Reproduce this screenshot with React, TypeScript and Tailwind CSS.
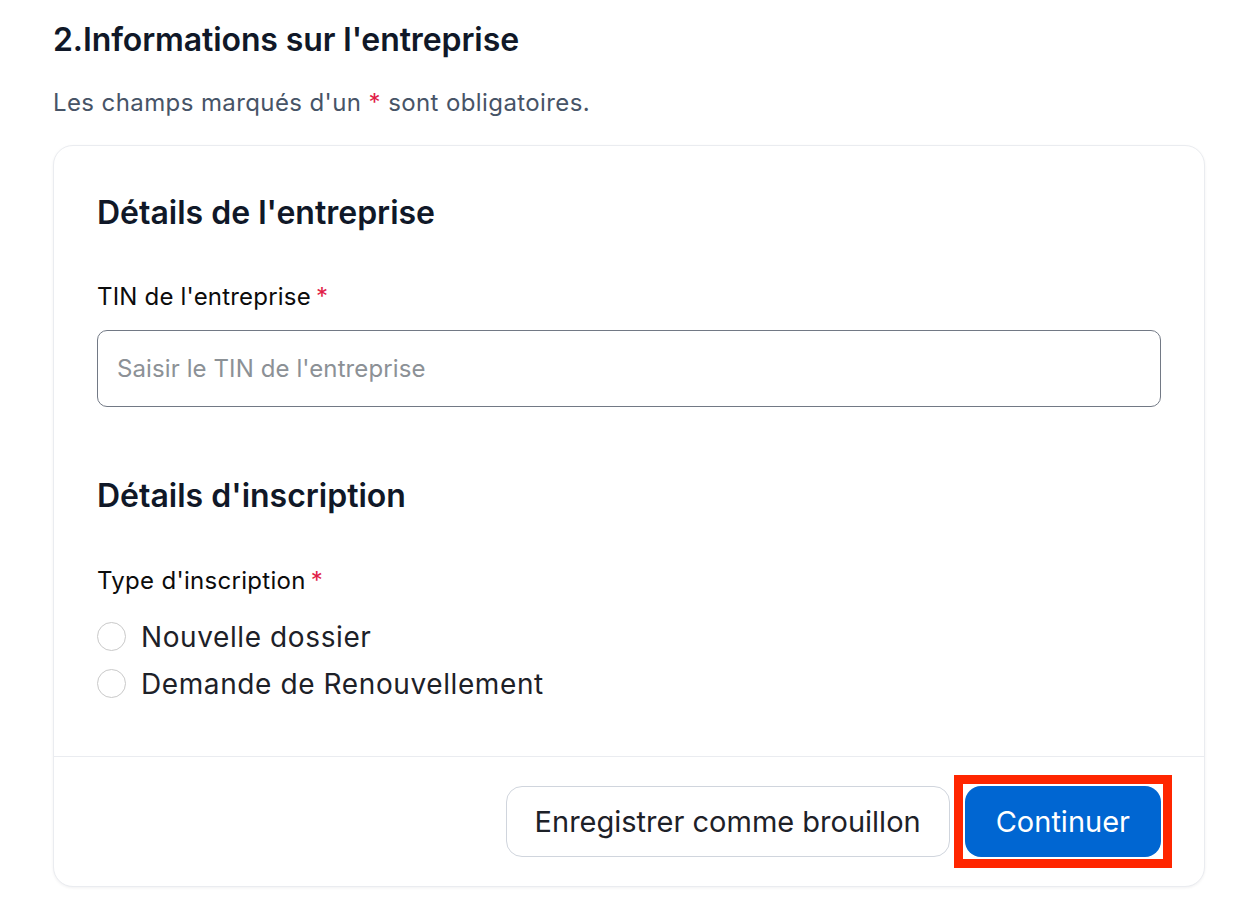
import { useState } from "react"

const font = { fontFamily: "Inter, 'Noto Sans', sans-serif" }

function Req() {
  return <span className="ml-[5px] text-[#e11d48]">*</span>
}

function Radio({ label, checked, onChange }: { label: string; checked: boolean; onChange: () => void }) {
  return (
    <label onClick={onChange} className="flex h-[47px] cursor-pointer items-center gap-[15px]">
      <span
        className={`h-[29px] w-[29px] shrink-0 rounded-full border bg-white ${checked ? "border-[8px] border-[#0066d2]" : "border-[#c9c9c9]"}`}
      />
      <span className="text-[28px] leading-[36px] tracking-[0.6px] text-[#1d2128]">{label}</span>
    </label>
  )
}

export default function App() {
  const [tin, setTin] = useState("")
  const [type, setType] = useState("")

  return (
    <div className="min-h-[900px] bg-white pt-[20px] pr-[51px] pb-[12px] pl-[53px]" style={font}>
      <h1 className="text-[32px] leading-[40px] font-semibold tracking-[-0.1px] text-[#101828]">
        2.Informations sur l'entreprise
      </h1>
      <p className="mt-[27px] text-[24px] leading-[32px] tracking-[0.4px] text-[#475467]">
        Les champs marqués d'un<span className="text-[#e11d48]"> * </span>sont obligatoires.
      </p>

      <div className="mt-[26px] rounded-[20px] border border-[#eaecf0] bg-white shadow-[0_1px_3px_rgba(16,24,40,0.06)]">
        <div className="px-[43px] pt-[47px] pb-[49px]">
          <h2 className="text-[32px] leading-[40px] font-semibold tracking-[0px] text-[#101828]">
            Détails de l'entreprise
          </h2>
          <label className="mt-[48px] block text-[24px] leading-[32px] tracking-[0.2px] text-[#0c0c0c]">
            TIN de l'entreprise
            <Req />
          </label>
          <input
            value={tin}
            onChange={(e) => setTin(e.target.value)}
            placeholder="Saisir le TIN de l'entreprise"
            className="mt-[17px] h-[77px] w-full rounded-[10px] border border-[#727985] px-[19px] text-[24px] tracking-[0.1px] text-[#101828] outline-none placeholder:text-[#8c9196]"
          />

          <h2 className="mt-[69px] text-[32px] leading-[40px] font-semibold tracking-[0px] text-[#101828]">
            Détails d'inscription
          </h2>
          <div className="mt-[49px] text-[24px] leading-[32px] tracking-[0.3px] text-[#0c0c0c]">
            Type d'inscription
            <Req />
          </div>
          <div className="mt-[16px] flex flex-col">
            <Radio label="Nouvelle dossier" checked={type === "new"} onChange={() => setType("new")} />
            <Radio label="Demande de Renouvellement" checked={type === "renew"} onChange={() => setType("renew")} />
          </div>
        </div>

        <div className="flex justify-end gap-[15px] border-t border-[#eaecf0] px-[43px] pt-[29px] pb-[29px]">
          <button className="h-[71px] rounded-[16px] border border-[#d0d5dd] bg-white px-[28px] text-[29px] tracking-[0px] text-[#1d2128]">
            Enregistrer comme brouillon
          </button>
          <div className="relative">
            <button className="h-[71px] rounded-[16px] bg-[#0066d2] px-[31px] text-[29px] tracking-[0px] text-white">
              Continuer
            </button>
            <span className="pointer-events-none absolute -inset-[11px] border-[9px] border-[#ff2600]" />
          </div>
        </div>
      </div>
    </div>
  )
}
